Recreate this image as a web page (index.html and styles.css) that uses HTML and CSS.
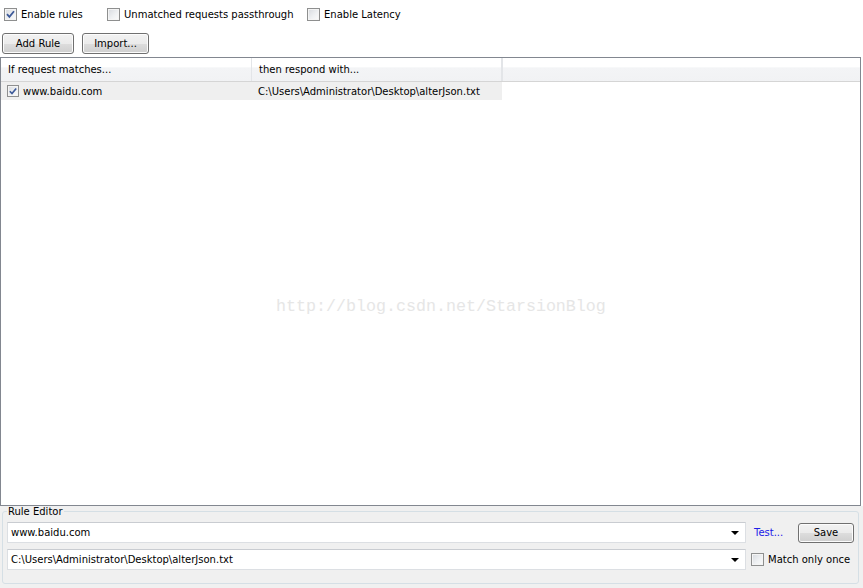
FILE: index.html
```html
<!DOCTYPE html>
<html>
<head>
<meta charset="utf-8">
<link rel="stylesheet" href="styles.css">
</head>
<body>
<div class="app">
  <div class="options">
    <label class="opt opt-rules"><span class="cb checked"><svg viewBox="0 0 11 11" width="11" height="11"><path d="M2 5.2 L4.4 7.8 L9 2.2" fill="none" stroke="#3d5a99" stroke-width="1.8"/></svg></span>Enable rules</label>
    <label class="opt opt-pass"><span class="cb"></span>Unmatched requests passthrough</label>
    <label class="opt"><span class="cb"></span>Enable Latency</label>
  </div>
  <div class="actions">
    <button class="btn btn-add">Add Rule</button>
    <button class="btn btn-import">Import...</button>
  </div>
  <div class="list">
    <div class="list-head">
      <div class="col c1">If request matches...</div>
      <div class="col c2">then respond with...</div>
      <div class="col c3"></div>
    </div>
    <div class="list-row">
      <div class="cell c1"><span class="cb checked"><svg viewBox="0 0 11 11" width="11" height="11"><path d="M2 5.2 L4.4 7.8 L9 2.2" fill="none" stroke="#3d5a99" stroke-width="1.8"/></svg></span>www.baidu.com</div>
      <div class="cell c2">C:\Users\Administrator\Desktop\alterJson.txt</div>
    </div>
    <div class="watermark">http://blog.csdn.net/StarsionBlog</div>
  </div>
  <div class="editor">
    <fieldset class="group">
      <legend>Rule Editor</legend>
      <div class="erow">
        <div class="combo"><span class="combo-text">www.baidu.com</span><span class="arrow"></span></div>
        <a class="test">Test...</a>
        <button class="btn btn-save">Save</button>
      </div>
      <div class="erow erow2">
        <div class="combo"><span class="combo-text">C:\Users\Administrator\Desktop\alterJson.txt</span><span class="arrow"></span></div>
        <label class="opt opt-once"><span class="cb"></span>Match only once</label>
      </div>
    </fieldset>
  </div>
</div>
</body>
</html>
```

FILE: styles.css
```css
html, body {
  margin: 0;
  padding: 0;
}
body {
  width: 863px;
  height: 588px;
  overflow: hidden;
  background: #ffffff;
  font-family: "DejaVu Sans", Tahoma, sans-serif;
  font-size: 10px;
  color: #000;
}
.app {
  display: flex;
  flex-direction: column;
  height: 588px;
}
.options {
  display: flex;
  align-items: center;
  height: 28px;
  padding-left: 4px;
}
.opt {
  display: flex;
  align-items: center;
  white-space: nowrap;
}
.opt-rules { width: 103px; }
.opt-pass { width: 200px; }
.cb {
  box-sizing: border-box;
  width: 13px;
  height: 13px;
  border: 1px solid #8e8f8f;
  background: linear-gradient(135deg, #d6d9de 0%, #eef0f2 55%, #fbfbfb 100%);
  box-shadow: inset 0 0 0 1px #f4f4f4;
  margin-right: 4px;
  display: inline-flex;
  align-items: center;
  justify-content: center;
  flex: none;
}
.cb svg { display: block; }
.actions {
  display: flex;
  height: 21px;
  margin-top: 5px;
  padding-left: 2px;
  gap: 8px;
}
.btn {
  box-sizing: border-box;
  height: 21px;
  padding: 0;
  border: 1px solid #707070;
  border-radius: 3px;
  background: linear-gradient(#f2f2f2 0%, #ebebeb 50%, #dddddd 51%, #cfcfcf 100%);
  box-shadow: inset 0 0 0 1px #fcfcfc;
  font-family: "DejaVu Sans", Tahoma, sans-serif;
  font-size: 10px;
  color: #000;
}
.btn-add { width: 72px; }
.btn-import { width: 67px; }
.list {
  position: relative;
  box-sizing: border-box;
  width: 861px;
  height: 449px;
  margin-top: 3px;
  border: 1px solid #828790;
  background: #fff;
  overflow: hidden;
}
.list-head {
  display: flex;
  height: 23px;
  border-bottom: 1px solid #d5d5d5;
  background: linear-gradient(#ffffff 0%, #ffffff 40%, #f3f4f6 42%, #f1f2f4 100%);
}
.col {
  box-sizing: border-box;
  display: flex;
  align-items: center;
  padding-left: 7px;
  white-space: nowrap;
}
.list-head .col.c1,
.list-row .cell.c1 { width: 251px; }
.list-head .col.c2,
.list-row .cell.c2 { width: 250px; }
.list-head .col.c1 { border-right: 1px solid #e3e5e8; }
.list-head .col.c2 { border-right: 2px solid #e3e5e8; width: 251px; }
.list-head .col.c3 { flex: 1; }
.list-row {
  display: flex;
  height: 18px;
  width: 501px;
  background: #efefef;
}
.cell {
  box-sizing: border-box;
  display: flex;
  align-items: center;
  white-space: nowrap;
}
.list-row .cell.c1 { padding-left: 6px; }
.list-row .cell.c2 { padding-left: 6px; }
.list-row .cb { width: 12px; height: 12px; margin-right: 4px; }
.watermark {
  position: absolute;
  left: 275px;
  top: 239px;
  font-family: "Liberation Mono", monospace;
  font-size: 16.67px;
  line-height: 20px;
  color: #e6e6e6;
  white-space: nowrap;
}
.editor {
  flex: 1;
  background: #f0f0f0;
  padding: 0 0 0 2px;
}
.group {
  box-sizing: border-box;
  width: 857px;
  margin: 0;
  padding: 5px 4px 13px 4px;
  border: 1px solid #d5dfe5;
  border-radius: 3px;
}
.group legend {
  padding: 0 1px;
  margin-left: 0;
  line-height: 11px;
  font-size: 10px;
}
.erow {
  display: flex;
  align-items: center;
  height: 21px;
}
.erow2 { margin-top: 6px; }
.combo {
  box-sizing: border-box;
  width: 739px;
  height: 21px;
  display: flex;
  align-items: center;
  justify-content: space-between;
  background: #fff;
  border: 1px solid #dcdfe3;
  border-top-color: #c9ccd1;
  padding: 0 6px 0 3px;
}
.arrow {
  width: 0;
  height: 0;
  border-left: 4px solid transparent;
  border-right: 4px solid transparent;
  border-top: 4px solid #000;
}
.test {
  color: #2020e8;
  margin-left: 8px;
  width: 44px;
  cursor: pointer;
}
.btn-save {
  width: 56px;
  height: 20px;
}
.opt-once { margin-left: 5px; }
.opt-once .cb { margin-right: 4px; }
```
